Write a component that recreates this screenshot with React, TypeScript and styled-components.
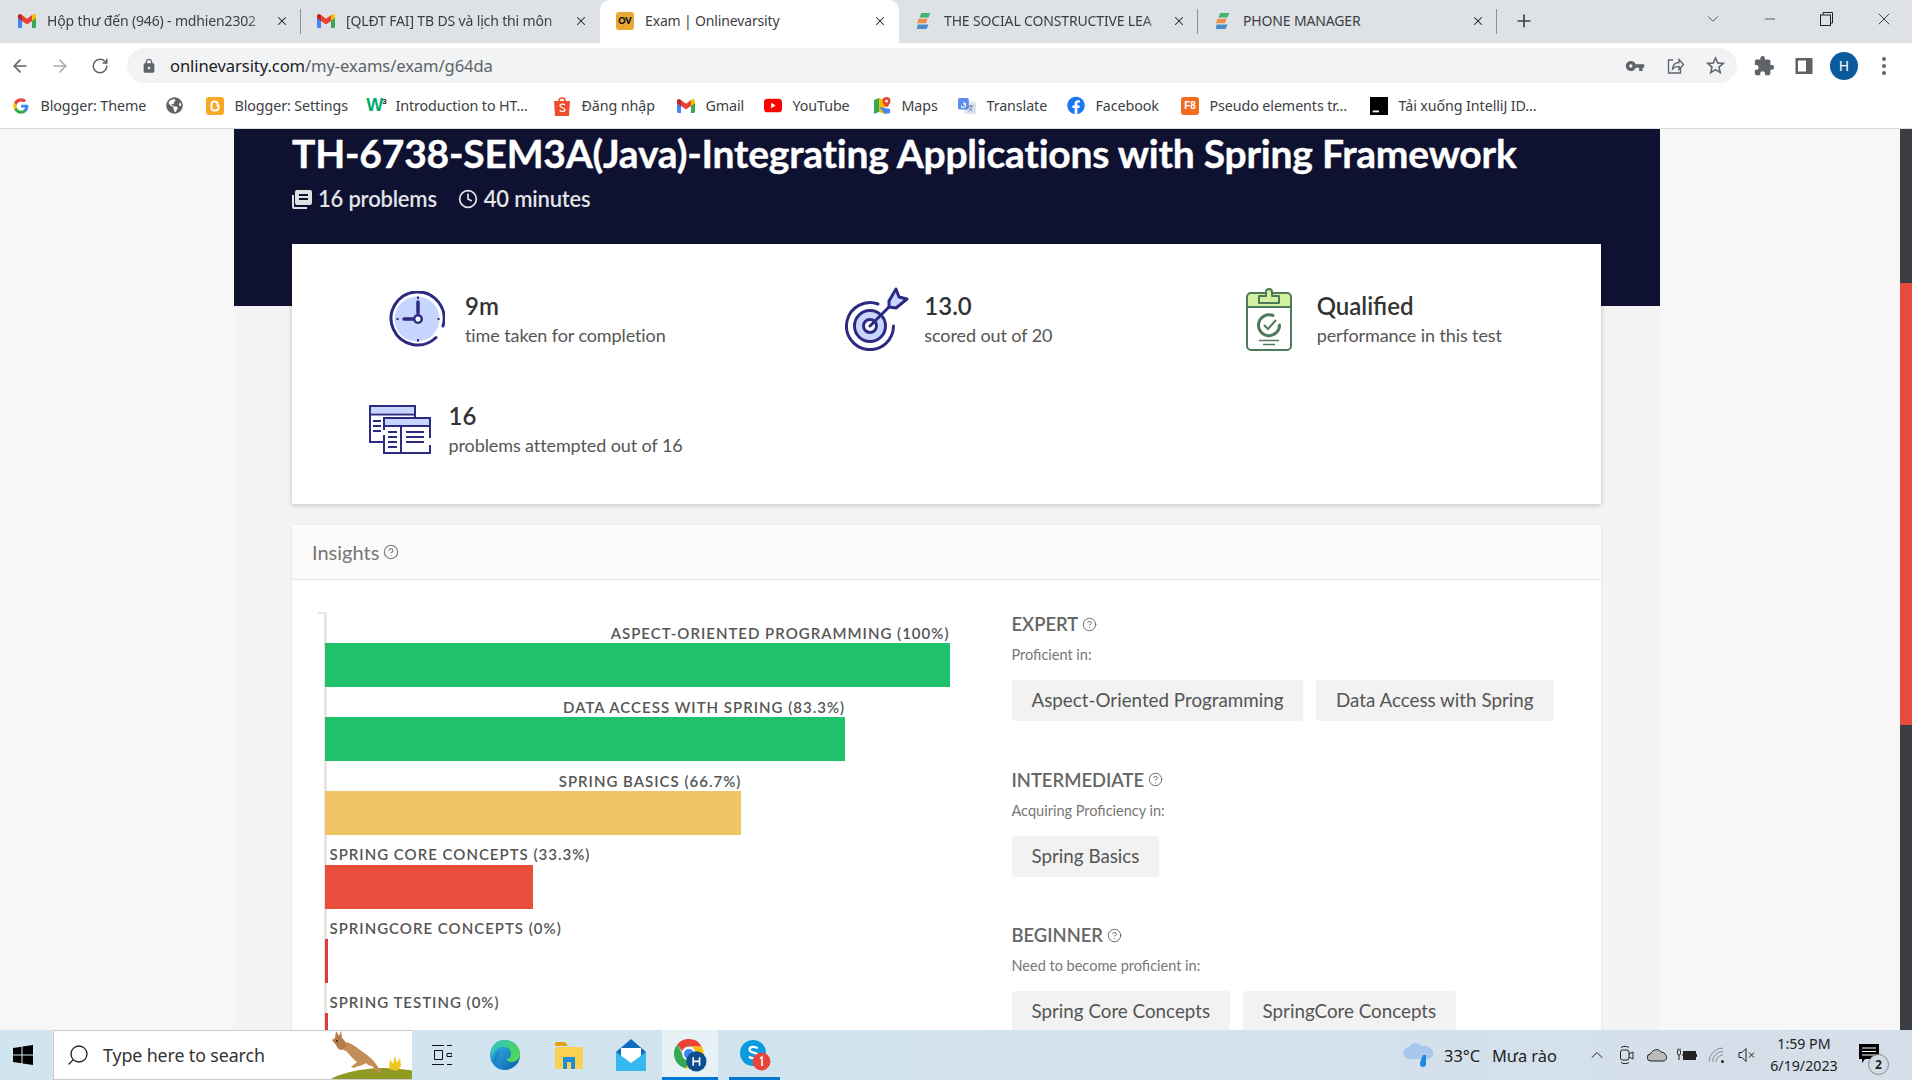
import React from "react";
import styled, { createGlobalStyle } from "styled-components";
import { ArrowLeft, ArrowRight, RotateCw, X, Plus, ChevronDown, Minus, CircleHelp, Clock, Search, ChevronUp } from "lucide-react";
import { MdLock, MdVpnKey, MdStarBorder, MdExtension } from "react-icons/md";
import { FaFacebook, FaGlobeAmericas } from "react-icons/fa";

const Global = createGlobalStyle`
  html, body { margin: 0; padding: 0; height: 100%; overflow: hidden; background: #f7f7f7; }
  #root { height: 100%; }
  * { box-sizing: border-box; }
`;

const UI = `"Noto Sans", "Open Sans", sans-serif`;
const LATO = `Lato, "Noto Sans", sans-serif`;

const Shell = styled.div`
  width: 1912px; height: 1080px; display: flex; flex-direction: column; overflow: hidden;
  font-family: ${UI};
`;
const TabStrip = styled.div`
  height: 43px; flex: none; background: #dee1e6; display: flex; padding-left: 2px; position: relative;
`;
const Tab = styled.div<{ $active?: boolean; $sep?: boolean }>`
  width: 299px; height: 43px; flex: none; display: flex; align-items: center; padding: 0 12px 2px 16px; position: relative;
  background: ${(p) => (p.$active ? "#fff" : "transparent")};
  border-radius: ${(p) => (p.$active ? "10px 10px 0 0" : "0")};
  &::after {
    content: ""; display: ${(p) => (p.$sep ? "block" : "none")}; position: absolute; right: 0; top: 9px; height: 25px; width: 1px; background: #8b8e93;
  }
`;
const TabIcon = styled.span`
  width: 18px; height: 18px; flex: none; display: flex; align-items: center; justify-content: center; margin-right: 11px;
`;
const TabTitle = styled.span<{ $fade?: boolean }>`
  flex: none; width: 222px; overflow: hidden; white-space: nowrap; font-size: 14px; color: #3c4043; letter-spacing: -0.15px;
  ${(p) => (p.$fade ? "mask-image: linear-gradient(to right, #000 90%, rgba(0,0,0,.25) 98%);" : "")}
`;
const TabClose = styled.span`
  flex: none; margin-left: 6px; width: 14px; height: 14px; display: flex; color: #202124;
`;
const LoadMark = styled.span`
  position: absolute; left: 801px; top: 0; width: 59px; height: 2px; background: #1a73e8;
`;
const PlusSlot = styled.div`
  width: 53px; display: flex; align-items: center; justify-content: center; color: #3c4043; padding-bottom: 1px;
`;
const WindowControls = styled.div`
  margin-left: auto; display: flex;
`;
const WindowBtn = styled.div`
  width: 57px; display: flex; align-items: center; justify-content: center; color: #202124; padding-bottom: 5px;
`;
const Toolbar = styled.div`
  height: 42px; flex: none; background: #fff; display: flex; align-items: center; padding-top: 3px;
`;
const ToolSlot = styled.div<{ $muted?: boolean }>`
  width: 40px; height: 35px; flex: none; display: flex; align-items: center; justify-content: center;
  color: ${(p) => (p.$muted ? "#a9abae" : "#5f6368")};
`;
const UrlPill = styled.div`
  width: 1610px; height: 35px; margin: 0 7px; flex: none; border-radius: 18px; background: #f1f3f4; display: flex; align-items: center; padding: 0 2px 0 14px;
`;
const UrlText = styled.span`
  margin-left: 13px; font-size: 16.6px; color: #5f6368; letter-spacing: -0.1px; white-space: nowrap;
  b { font-weight: 400; color: #202124; }
`;
const UrlActions = styled.div`
  margin-left: auto; display: flex;
`;
const Avatar = styled.span`
  width: 28px; height: 28px; border-radius: 50%; background: #0b5a9e; color: #fff; font-size: 14px; display: flex; align-items: center; justify-content: center;
`;
const Dots = styled.span`
  display: flex; flex-direction: column; gap: 3px;
  i { width: 4px; height: 4px; border-radius: 50%; background: #5f6368; display: block; }
`;
const Bookmarks = styled.div`
  height: 44px; flex: none; background: #fff; border-bottom: 1px solid #dadce0; display: flex; align-items: center; padding: 0 0 2px 12px;
`;
const Bookmark = styled.div<{ $w: number }>`
  width: ${(p) => p.$w}px; flex: none; display: flex; align-items: center; white-space: nowrap;
  font-size: 14.3px; color: #3c4043; letter-spacing: -0.1px;
`;
const BookmarkIcon = styled.span`
  width: 18px; height: 18px; flex: none; display: flex; align-items: center; justify-content: center; margin-right: 10.5px;
`;
const SquareBadge = styled.span<{ $bg: string }>`
  width: 18px; height: 18px; border-radius: 3px; background: ${(p) => p.$bg}; color: #fff; display: flex; align-items: center; justify-content: center;
  font: 700 10px "Liberation Sans", sans-serif;
`;
const OvBadge = styled.span`
  width: 18px; height: 18px; border-radius: 3px; background: #e9a82f; color: #151515; display: flex; align-items: center; justify-content: center;
  font: 800 9px Lato, sans-serif;
`;
const W3Mark = styled.span`
  color: #04aa6d; font: 700 18px "Liberation Sans", sans-serif; letter-spacing: -1px; white-space: nowrap;
  sup { font-size: 8px; line-height: 0; color: #222; }
`;
const Body = styled.div`
  flex: 1; min-height: 0; display: flex; background: #f7f7f7; overflow: hidden;
`;
const Page = styled.div`
  flex: 1; min-width: 0; overflow: hidden; padding-left: 234px;
`;
const Container = styled.div`
  width: 1426px; min-height: 100%; background: #f4f4f4;
`;
const Hero = styled.div`
  height: 177px; background: #0f1130; padding: 1px 58px 0; color: #fff;
`;
const Title = styled.h1`
  margin: 0; font: 700 39px/46px ${LATO}; color: #fff; white-space: nowrap; letter-spacing: -0.22px; -webkit-text-stroke: 0.4px #fff;
`;
const HeroMeta = styled.div`
  display: flex; align-items: center; margin-top: 8px; color: #e2e3e8; font: 600 22px/30px ${LATO};
`;
const MetaItem = styled.span`
  display: flex; align-items: center; gap: 6px; margin-right: 21px; letter-spacing: -0.2px;
`;
const Content = styled.div`
  margin: -62px 59px 0 58px; display: flex; flex-direction: column; gap: 21px;
`;
const StatsCard = styled.div`
  height: 260px; background: #fff; box-shadow: 0 1px 5px rgba(0, 0, 0, 0.22); padding: 20px 0; display: grid; grid-template-columns: repeat(3, 1fr); grid-auto-rows: 110px;
`;
const Stat = styled.div<{ $indent: number; $gap: number }>`
  display: flex; align-items: center; margin-left: ${(p) => p.$indent}px; gap: ${(p) => p.$gap}px;
`;
const StatText = styled.div`
  margin-top: -2px;
`;
const StatValue = styled.div`
  font: 600 24px/32px ${LATO}; color: #333;
`;
const StatLabel = styled.div`
  font: 400 18px/24px ${LATO}; color: #555; white-space: nowrap; margin-top: 1px; letter-spacing: -0.1px;
`;
const InsightsCard = styled.div`
  background: #fff; box-shadow: 0 0 3px rgba(0, 0, 0, 0.07); height: 700px;
`;
const InsightsHead = styled.div`
  height: 55px; background: #fbfbfb; border-bottom: 1px solid #e5e5e5; padding: 0 20px; display: flex; align-items: center; gap: 4px; font: 400 20px ${LATO}; color: #777;
`;
const InsightsBody = styled.div`
  display: flex; padding: 32px 0 0 32.5px;
`;
const Chart = styled.div`
  width: 625px; flex: none; position: relative; padding-top: 12px; margin-right: 62px; height: 520px;
  &::before { content: ""; position: absolute; left: -1px; top: 0; bottom: 0; width: 3px; background: #e6e6e6; }
  &::after { content: ""; position: absolute; left: -7px; top: 0; width: 7px; height: 2px; background: #e6e6e6; }
`;
const BarRow = styled.div`
  position: relative; margin-bottom: 11px; z-index: 1;
`;
const BarLabel = styled.div<{ $out: boolean }>`
  height: 19px; font: 600 15px/${(p) => (p.$out ? "17px" : "18px")} ${LATO}; color: #555; letter-spacing: 1px; white-space: nowrap;
  text-align: ${(p) => (p.$out ? "left" : "right")}; padding-left: ${(p) => (p.$out ? "5px" : "0")};
`;
const Bar = styled.div<{ $c: string }>`
  height: 44px; background: ${(p) => p.$c};
`;
const Levels = styled.div`
  flex: 1; min-width: 0;
`;
const Level = styled.div`
  margin-bottom: 46.5px;
`;
const LevelTitle = styled.div`
  height: 24px; display: flex; align-items: center; gap: 4px; font: 600 18.4px/24px ${LATO}; color: #666;
`;
const LevelSub = styled.div`
  font: 400 14.5px/20px ${LATO}; color: #777; margin-top: 9px;
`;
const Chips = styled.div`
  display: flex; gap: 12.5px; margin-top: 15px;
`;
const Chip = styled.div`
  height: 41px; padding: 0 20px; border-radius: 3px; background: #f2f2f2; color: #555; font: 400 18.8px/40px ${LATO}; white-space: nowrap;
`;
const ScrollTrack = styled.div`
  width: 12px; flex: none; background: #3a3d42; padding-top: 154px;
`;
const ScrollThumb = styled.div`
  height: 442px; background: #e74c3c;
`;
const Taskbar = styled.div`
  height: 50px; flex: none; display: flex; align-items: stretch; background: linear-gradient(90deg, #d0e5ef 0%, #d2e3ee 50%, #d5dee9 100%); position: relative;
`;
const StartBtn = styled.div`
  width: 53px; flex: none; display: flex; align-items: center; justify-content: center; padding-right: 8px;
`;
const SearchBox = styled.div`
  width: 359px; flex: none; background: #fff; border: 1px solid #c9cdd0; border-right: 0; display: flex; align-items: center; padding-left: 12px; overflow: hidden;
  color: #202020; font-size: 17.8px;
`;
const SearchText = styled.span`
  margin-left: 13px; letter-spacing: -0.1px; white-space: nowrap; color: #333;
`;
const Roo = styled.svg`
  margin-left: auto; flex: none;
`;
const TaskSlot = styled.div<{ $w: number; $on?: boolean; $open?: boolean }>`
  width: ${(p) => p.$w}px; flex: none; display: flex; align-items: center; justify-content: center; position: relative;
  background: ${(p) => (p.$on ? "#e6f1f6" : "transparent")};
  border-bottom: 3px solid ${(p) => (p.$open ? "#0078d4" : "transparent")};
  border-top: 3px solid transparent;
`;
const Weather = styled.div`
  margin-left: 623px; flex: none; display: flex; align-items: center; color: #222; font-size: 16.4px; white-space: nowrap;
`;
const Temp = styled.span`
  margin-left: 11px; width: 48px;
`;
const TrayRow = styled.div`
  margin-left: 25px; display: flex; align-items: center; flex: 1;
`;
const TraySlot = styled.div`
  width: 30px; flex: none; display: flex; align-items: center; justify-content: center; color: #222;
`;
const ClockBox = styled.div`
  width: 84px; flex: none; display: flex; flex-direction: column; align-items: center; justify-content: center; gap: 2px; font-size: 14.2px; line-height: 20px; color: #222;
`;
const Notify = styled.div`
  flex: 1; height: 50px; display: flex; align-items: center; padding: 0 0 2px 13px; position: relative;
`;
const NotifyBadge = styled.span`
  position: absolute; left: 22px; top: 24px; width: 21px; height: 21px; border-radius: 50%; background: #d3dbe4; border: 1px solid #888; font-size: 12px; font-weight: 700; color: #222; display: flex; align-items: center; justify-content: center;
`;

const Gmail = () => (
  <svg width="18" height="14" viewBox="0 0 18 14">
    <path d="M0 2v10.500A1.500 1.500 0 0 0 1.500 14H4V6z" fill="#4285f4" />
    <path d="M18 2v10.500a1.500 1.500 0 0 1-1.500 1.500H14V6z" fill="#34a853" />
    <path d="M14 1v6l4-3V2c0-1.600-2-2.600-3-1.500z" fill="#fbbc04" />
    <path d="M4 7V1l5 3.800L14 1v6L9 10.600z" fill="#ea4335" />
    <path d="M0 2v2l4 3V1L3 .5C2 -.5 0 .4 0 2z" fill="#c5221f" />
  </svg>
);
const Stripes = () => (
  <svg width="20" height="20" viewBox="0 0 20 20">
    <path d="M7 1h10l-2 5H5z" fill="#3fb66b" />
    <path d="M4 7.500h10l-2 5H2z" fill="#f08b4f" />
    <path d="M3 14h12l-2 5H2z" fill="#4a8cc7" />
  </svg>
);
const ShareIcon = () => (
  <svg width="20" height="20" viewBox="0 0 20 20" fill="none" stroke="#5f6368" strokeWidth="1.300">
    <path d="M8 4H3.500v13h12v-5" />
    <path d="M7.500 13c.5-4 3-6.500 6.500-6.500V3.500l4.500 5-4.500 5v-3.200c-3 0-5 1-6.500 2.700z" />
  </svg>
);
const PanelIcon = () => (
  <svg width="18" height="18" viewBox="0 0 18 18">
    <rect x="0.500" y="1" width="17" height="16" fill="#5f6368" />
    <rect x="3" y="3.500" width="8" height="11" fill="#fff" />
  </svg>
);
const GoogleG = () => (
  <svg width="16" height="16" viewBox="0 0 48 48">
    <path fill="#4285f4" d="M46 24.500c0-1.600-.1-3.100-.4-4.500H24v8.700h12.400c-.5 2.900-2.100 5.300-4.600 6.900v5.700h7.400c4.300-4 6.800-9.900 6.800-16.800z" />
    <path fill="#34a853" d="M24 47c6.200 0 11.400-2 15.200-5.600l-7.400-5.700c-2 1.400-4.700 2.200-7.800 2.200-6 0-11.100-4-12.900-9.500H3.500v5.900C7.300 41.800 15 47 24 47z" />
    <path fill="#fbbc04" d="M11.100 28.900c-1-2.900-1-6 0-8.800v-6H3.500a23 23 0 0 0 0 20.800z" />
    <path fill="#ea4335" d="M24 10.200c3.400 0 6.400 1.200 8.800 3.400l6.600-6.600C35.400 3.300 30.200 1 24 1 15 1 7.300 6.200 3.500 14.100l7.600 6C12.900 14.500 18 10.200 24 10.200z" />
  </svg>
);
const BloggerMark = () => (
  <SquareBadge $bg="#f9a825">
    <svg width="10" height="12" viewBox="0 0 10 12" fill="none" stroke="#fff" strokeWidth="2">
      <path d="M1.500 4a2.500 2.500 0 0 1 2.500-2.500h1A2.500 2.500 0 0 1 7.500 4v1.500H8.500V8A2.500 2.500 0 0 1 6 10.500H4A2.500 2.500 0 0 1 1.500 8z" />
    </svg>
  </SquareBadge>
);
const Shopee = () => (
  <svg width="18" height="20" viewBox="0 0 18 20">
    <path d="M6 5a3 3 0 0 1 6 0" fill="none" stroke="#ee4d2d" strokeWidth="1.500" />
    <path d="M1 5h16l-1 15H2z" fill="#ee4d2d" />
    <path d="M12 9c-1-1.300-5-1.500-5 .8 0 2.400 5 1.500 5 4 0 2.200-4 2-5.300.7" fill="none" stroke="#fff" strokeWidth="1.300" />
  </svg>
);
const YouTube = () => (
  <svg width="20" height="15" viewBox="0 0 20 15"><rect width="20" height="15" rx="4" fill="#f00" /><path d="M8 4.500v6l5-3z" fill="#fff" /></svg>
);
const MapsPin = () => (
  <svg width="18" height="18" viewBox="0 0 18 18">
    <path d="M1 3l5-2v14l-5 2z" fill="#34a853" />
    <path d="M6 1l6 2v14l-6-2z" fill="#fbbc04" />
    <path d="M6 10l6 7 5-1V12z" fill="#4285f4" />
    <path d="M13.500 0a4 4 0 0 0-4 4c0 3 4 6.500 4 6.500s4-3.500 4-6.500a4 4 0 0 0-4-4z" fill="#ea4335" />
    <circle cx="13.500" cy="4" r="1.500" fill="#fff" />
  </svg>
);
const TranslateMark = () => (
  <svg width="20" height="18" viewBox="0 0 20 18">
    <rect x="7" y="4" width="13" height="14" rx="2" fill="#dde3ee" />
    <rect x="0" y="0" width="12" height="13" rx="2" fill="#5b8def" />
    <path d="M3.500 8.500a2.500 2.500 0 1 0 2.500-3M6 7h2.500" fill="none" stroke="#fff" strokeWidth="1.200" />
    <path d="M11 9h6M14 8v2M12 15l4-5M13 11l3 4" fill="none" stroke="#6b7a90" strokeWidth="1" />
  </svg>
);
const BlackMark = () => (
  <svg width="20" height="20" viewBox="0 0 20 20"><rect width="20" height="20" fill="#000" /><rect x="3" y="15" width="7" height="2" fill="#fff" /></svg>
);

const INK = "#2e2a82";
const ClockStat = () => (
  <svg width="56" height="56" viewBox="0 0 56 56" fill="none">
    <circle cx="28" cy="28" r="22.500" fill="#c6d6ff" />
    <path d="M54 35A26.500 26.500 0 1 0 47 46.500" stroke={INK} strokeWidth="3" strokeLinecap="round" />
    <path d="M29 11v11" stroke={INK} strokeWidth="3.500" strokeLinecap="round" />
    <path d="M15 28h9" stroke={INK} strokeWidth="3.500" strokeLinecap="round" />
    <circle cx="29" cy="28" r="3.800" fill="#fff" stroke={INK} strokeWidth="2.500" />
    <path d="M29 5.500v2.500M29 48v2.500M7.500 28h2M50.500 28h-2" stroke={INK} strokeWidth="2" />
  </svg>
);
const TargetStat = () => (
  <svg width="64" height="64" viewBox="0 0 64 64" fill="none">
    <path d="M33 17A23.500 23.500 0 1 0 48.500 39" stroke={INK} strokeWidth="3" strokeLinecap="round" />
    <circle cx="25" cy="39" r="15.500" fill="#c6d6ff" stroke={INK} strokeWidth="3" />
    <circle cx="25" cy="39" r="6.500" fill="#fff" stroke={INK} strokeWidth="3" />
    <path d="M25 39l22-22" stroke={INK} strokeWidth="3" strokeLinecap="round" />
    <path d="M44 14l7-12 3 8 8 2-11 9-7-1z" fill="#c6d6ff" stroke={INK} strokeWidth="3" strokeLinejoin="round" />
  </svg>
);
const GRN = "#4f7a5a";
const ClipStat = () => (
  <svg width="46" height="63" viewBox="0 0 46 63" fill="none">
    <path d="M1.500 7a3 3 0 0 1 3-3h37a3 3 0 0 1 3 3v12h-43z" fill="#d2f0a0" />
    <rect x="1" y="5" width="44" height="57" rx="4" stroke={GRN} strokeWidth="2" />
    <path d="M1 19h44" stroke={GRN} strokeWidth="2" />
    <path d="M13 14V7h7V3a3 3 0 0 1 6 0v4h7v7z" transform="translate(0 1)" fill="#d2f0a0" stroke={GRN} strokeWidth="2" strokeLinejoin="round" />
    <path d="M27 27.500A10.500 10.500 0 1 0 33.500 37" stroke={GRN} strokeWidth="3" strokeLinecap="round" />
    <path d="M18 37l4 4 8-9" stroke={GRN} strokeWidth="2" />
    <path d="M13 52.500h20M17 56.500h12" stroke={GRN} strokeWidth="1.500" />
  </svg>
);
const WindowsStat = () => (
  <svg width="62" height="49" viewBox="0 0 62 49" fill="none">
    <rect x="1" y="1" width="45" height="36" fill="#fff" stroke={INK} strokeWidth="2" />
    <rect x="2" y="2" width="43" height="6" fill="#c6d6ff" />
    <path d="M1 9.500h45M4 16h8M4 21h8M4 26h8" stroke={INK} strokeWidth="2" />
    <rect x="15" y="13" width="46" height="35" fill="#fff" />
    <path d="M15 30v18h46v-8M61 33V13H15v12" stroke={INK} strokeWidth="2" />
    <rect x="16" y="14" width="44" height="6" fill="#c6d6ff" />
    <path d="M15 21h46M32 21v27M19 27h9M19 32h9M19 37h9M19 42h9M37 27h18M37 32h18M37 37h18" stroke={INK} strokeWidth="2" />
  </svg>
);
const Newspaper = () => (
  <svg width="20" height="19" viewBox="0 0 20 19" fill="#dfe0e6">
    <path d="M5 0h13a2 2 0 0 1 2 2v11a2 2 0 0 1-2 2H5a2 2 0 0 1-2-2V2a2 2 0 0 1 2-2zm2 4v2h9V4zm0 4v2h9V8z" fillRule="evenodd" />
    <path d="M0 5h2v12h13v2H2a2 2 0 0 1-2-2z" />
  </svg>
);
const WinLogo = () => (
  <svg width="20" height="20" viewBox="0 0 20 20" fill="#000">
    <path d="M0 3l8.500-1.200V9.500H0zM9.500 1.600L20 0v9.500H9.500zM0 10.500h8.500v7.700L0 17zM9.500 10.500H20V20L9.500 18.400z" />
  </svg>
);
const Kangaroo = () => (
  <Roo width="92" height="48" viewBox="0 0 92 48">
    <ellipse cx="64" cy="62" rx="64" ry="25" fill="#8e9a22" />
    <path d="M20 12c5-3 13 1 20 7 6 4 13 9 16 14l6 9-4 0-6-7c-3 0-4-1-6-3-4 3-9 3-12 5l-3-1 6-5c-3-2-8-8-11-11-4-1-7-5-6-8z" fill="#c58d58" />
    <path d="M12 9l3-2 1-7 3 5 2-5 1 7c3 2 4 5 4 8l-4 4c-3 0-5-2-6-5z" fill="#b57d4a" />
    <circle cx="17" cy="10" r="1" fill="#222" />
    <path d="M69 38l1-10 3 5 2-8 2 7 3-5 1 8-4 5z" fill="#f0c51c" />
  </Roo>
);
const Edge = () => (
  <svg width="30" height="30" viewBox="0 0 30 30">
    <defs>
      <linearGradient id="eg" x1="0" y1="0" x2="1" y2="1"><stop offset="0" stopColor="#35c1f1" /><stop offset="1" stopColor="#0c59a4" /></linearGradient>
      <linearGradient id="eg2" x1="0" y1="0" x2="1" y2="0.500"><stop offset="0" stopColor="#2cc1c8" /><stop offset="1" stopColor="#52d65c" /></linearGradient>
    </defs>
    <circle cx="15" cy="15" r="15" fill="url(#eg)" />
    <path d="M15 0c9 0 15 7 15 14 0 5-4 8-8 8-3 0-5-1-6-3 3 0 5-2 5-5 0-5-5-8-10-7C6 8 3 12 1 17-1 8 5 0 15 0z" fill="url(#eg2)" />
    <path d="M8 20c0 5 5 9 10 9-5 2-13 0-15-7 0-5 3-10 8-12-2 3-3 6-3 10z" fill="#1a85c8" />
  </svg>
);
const Folder = () => (
  <svg width="28" height="28" viewBox="0 0 28 28">
    <path d="M0 3a2 2 0 0 1 2-2h8l3 4H0z" fill="#e2a10c" />
    <rect y="6" width="28" height="22" rx="2" fill="#fcd053" />
    <path d="M8 28V16h12v12h-4v-7h-4v7z" fill="#1d8fd8" />
  </svg>
);
const MailIcon = () => (
  <svg width="30" height="32" viewBox="0 0 30 32">
    <path d="M15 0l15 13v19H0V13z" fill="#0f6cbd" />
    <path d="M5 9h20v12l-10 5-10-5z" fill="#fff" />
    <path d="M0 13l15 11 15-11v19H0z" fill="#35b8f0" />
  </svg>
);
const ChromeIcon = () => (
  <svg width="34" height="34" viewBox="0 0 32 32">
    <path d="M15 1a14 14 0 0 1 12.100 7H15a7 7 0 0 0-6.500 4.500L4 6a14 14 0 0 1 11-5z" fill="#ea4335" />
    <path d="M4 6l6 11a6 6 0 0 0 6 4l-4 7.500A14 14 0 0 1 4 6z" fill="#34a853" />
    <path d="M27.100 8a14 14 0 0 1-15 20.500l6-10.500a7 7 0 0 0 0-10z" fill="#fbbc04" />
    <circle cx="15" cy="15" r="5.500" fill="#4285f4" stroke="#fff" strokeWidth="1.500" />
    <circle cx="22" cy="22" r="9.500" fill="#0b4f8f" />
    <path d="M19 18v8M25 18v8M19 22h6" stroke="#fff" strokeWidth="1.500" />
  </svg>
);
const SkypeIcon = () => (
  <svg width="32" height="32" viewBox="0 0 32 32">
    <circle cx="14" cy="14" r="13" fill="#0d9be0" />
    <path d="M18.500 9.500c-1.500-2-8-2.500-8 1.200 0 3.800 8.500 2 8.500 6 0 3.500-7 3.500-9 .8" fill="none" stroke="#fff" strokeWidth="2.200" />
    <circle cx="22.500" cy="22.500" r="9" fill="#e8453c" />
    <path d="M21 19.500l2-1.500v9" stroke="#fff" strokeWidth="1.600" fill="none" />
  </svg>
);
const CloudRain = () => (
  <svg width="30" height="28" viewBox="0 0 30 28">
    <path d="M7 18a6 6 0 0 1-1-12c2-4 9-6 12-1 6-1 12 2 12 7 0 4-3 6-7 6z" fill="#a7c7ec" />
    <path d="M20 14l3 0v9a3 3 0 1 1-6 0c0-3 2-6 3-9z" fill="#1e88e5" />
  </svg>
);
const CamTray = () => (
  <svg width="16" height="20" viewBox="0 0 16 20" fill="none" stroke="#222" strokeWidth="1">
    <rect x="1.500" y="5" width="8.500" height="10" rx="2" /><path d="M10 9l4-2v7l-4-2" /><path d="M2 2.500C4 1 8 1 10 2.500M2 17.500c2 1.500 6 1.500 8 0" />
  </svg>
);
const CloudTray = () => (
  <svg width="20" height="14" viewBox="0 0 20 14"><path d="M4 13a3.500 3.500 0 0 1-.5-7C5 2 11-.5 14 4c3.500 0 5.500 3 5.500 5.500 0 2-1.500 3.500-3.500 3.500z" fill="#bbb" stroke="#222" strokeWidth="1" /></svg>
);
const BatteryTray = () => (
  <svg width="20" height="14" viewBox="0 0 20 14"><path d="M0.500 3v2.500a1.500 1.500 0 0 0 3 0V3M2 7v5M1 .5V3M3 .5V3" stroke="#222" fill="none" /><path d="M5 7h1" stroke="#222" /><rect x="6" y="3" width="13" height="9" fill="#222" /><rect x="19" y="6" width="1" height="3" fill="#222" /></svg>
);
const WifiTray = () => (
  <svg width="18" height="16" viewBox="0 0 18 16" fill="none" stroke="#8a8f96" strokeWidth="1"><path d="M1 15A14 14 0 0 1 15 1M4.500 15A10.500 10.500 0 0 1 15 4.500M8 15a7 7 0 0 1 7-7" /><circle cx="14.500" cy="14.500" r="1.500" fill="#222" stroke="none" /></svg>
);
const MuteTray = () => (
  <svg width="18" height="16" viewBox="0 0 18 16" fill="none" stroke="#222" strokeWidth="1"><path d="M1 5.500h3L8 1.500v13l-4-4H1zM11 5.500l5 5M16 5.500l-5 5" /></svg>
);
const ChatIcon = () => (
  <svg width="20" height="20" viewBox="0 0 20 20"><path d="M0 0h20v15H6l-3 4v-4H0z" fill="#000" /><path d="M3 4h14M3 7.500h14M3 11h14" stroke="#fff" /></svg>
);

const tabs = [
  { icon: <Gmail />, title: "Hộp thư đến (946) - mdhien2302", sep: true, fade: true },
  { icon: <Gmail />, title: "[QLĐT FAI] TB DS và lịch thi môn", sep: false, fade: true },
  { icon: <OvBadge>OV</OvBadge>, title: "Exam | Onlinevarsity", sep: false, active: true },
  { icon: <Stripes />, title: "THE SOCIAL CONSTRUCTIVE LEA", sep: true, fade: true },
  { icon: <Stripes />, title: "PHONE MANAGER", sep: true },
];
const bookmarks = [
  { w: 153, icon: <GoogleG />, text: "Blogger: Theme" },
  { w: 41, icon: <FaGlobeAmericas size={17} color="#5f6368" />, text: "" },
  { w: 161, icon: <BloggerMark />, text: "Blogger: Settings" },
  { w: 186, icon: <W3Mark>W<sup>3</sup></W3Mark>, text: "Introduction to HT..." },
  { w: 124, icon: <Shopee />, text: "Đăng nhập" },
  { w: 87, icon: <Gmail />, text: "Gmail" },
  { w: 109, icon: <YouTube />, text: "YouTube" },
  { w: 85, icon: <MapsPin />, text: "Maps" },
  { w: 109, icon: <TranslateMark />, text: "Translate" },
  { w: 114, icon: <FaFacebook size={19} color="#1877f2" />, text: "Facebook" },
  { w: 189, icon: <SquareBadge $bg="#f26b21">F8</SquareBadge>, text: "Pseudo elements tr..." },
  { w: 200, icon: <BlackMark />, text: "Tải xuống IntelliJ ID..." },
];
const stats = [
  { icon: <ClockStat />, value: "9m", label: "time taken for completion", indent: 97, gap: 20 },
  { icon: <TargetStat />, value: "13.0", label: "scored out of 20", indent: 117, gap: 15 },
  { icon: <ClipStat />, value: "Qualified", label: "performance in this test", indent: 81, gap: 25 },
  { icon: <WindowsStat />, value: "16", label: "problems attempted out of 16", indent: 77, gap: 17.5 },
];
const bars = [
  { label: "ASPECT-ORIENTED PROGRAMMING (100%)", pct: 100, color: "#1fc16b" },
  { label: "DATA ACCESS WITH SPRING (83.3%)", pct: 83.3, color: "#1fc16b" },
  { label: "SPRING BASICS (66.7%)", pct: 66.7, color: "#f0c565" },
  { label: "SPRING CORE CONCEPTS (33.3%)", pct: 33.3, color: "#e94e3d", out: true },
  { label: "SPRINGCORE CONCEPTS (0%)", pct: 0.6, color: "#e03a3a", out: true },
  { label: "SPRING TESTING (0%)", pct: 0.6, color: "#e03a3a", out: true },
];
const levels = [
  { name: "EXPERT", sub: "Proficient in:", chips: ["Aspect-Oriented Programming", "Data Access with Spring"] },
  { name: "INTERMEDIATE", sub: "Acquiring Proficiency in:", chips: ["Spring Basics"] },
  { name: "BEGINNER", sub: "Need to become proficient in:", chips: ["Spring Core Concepts", "SpringCore Concepts"] },
];

export default function App() {
  return (
    <Shell>
      <Global />
      <TabStrip>
        <LoadMark />
        {tabs.map((t) => (
          <Tab key={t.title} $active={t.active} $sep={t.sep}>
            <TabIcon>{t.icon}</TabIcon>
            <TabTitle $fade={t.fade}>{t.title}</TabTitle>
            <TabClose><X size={14} strokeWidth={1.8} /></TabClose>
          </Tab>
        ))}
        <PlusSlot><Plus size={20} strokeWidth={2} /></PlusSlot>
        <WindowControls>
          <WindowBtn><ChevronDown size={18} strokeWidth={1} /></WindowBtn>
          <WindowBtn><Minus size={16} strokeWidth={1} /></WindowBtn>
          <WindowBtn>
            <svg width="13" height="14" viewBox="0 0 13 14" fill="none" stroke="#202124"><rect x="0.500" y="3" width="10" height="10.500" /><path d="M3 3V.5h9.500V11H10.500" /></svg>
          </WindowBtn>
          <WindowBtn><X size={20} strokeWidth={1} /></WindowBtn>
        </WindowControls>
      </TabStrip>
      <Toolbar>
        <ToolSlot><ArrowLeft size={20} strokeWidth={2} /></ToolSlot>
        <ToolSlot $muted><ArrowRight size={20} strokeWidth={2} /></ToolSlot>
        <ToolSlot><RotateCw size={18} strokeWidth={2} /></ToolSlot>
        <UrlPill>
          <MdLock size={16} color="#5f6368" />
          <UrlText><b>onlinevarsity.com</b>/my-exams/exam/g64da</UrlText>
          <UrlActions>
            <ToolSlot><MdVpnKey size={20} /></ToolSlot>
            <ToolSlot><ShareIcon /></ToolSlot>
            <ToolSlot><MdStarBorder size={23} /></ToolSlot>
          </UrlActions>
        </UrlPill>
        <ToolSlot><MdExtension size={22} /></ToolSlot>
        <ToolSlot><PanelIcon /></ToolSlot>
        <ToolSlot><Avatar>H</Avatar></ToolSlot>
        <ToolSlot><Dots><i /><i /><i /></Dots></ToolSlot>
      </Toolbar>
      <Bookmarks>
        {bookmarks.map((b, i) => (
          <Bookmark key={i} $w={b.w}>
            <BookmarkIcon>{b.icon}</BookmarkIcon>
            {b.text}
          </Bookmark>
        ))}
      </Bookmarks>
      <Body>
        <Page>
          <Container>
            <Hero>
              <Title>TH-6738-SEM3A(Java)-Integrating Applications with Spring Framework</Title>
              <HeroMeta>
                <MetaItem><Newspaper /> 16 problems</MetaItem>
                <MetaItem><Clock size={20} strokeWidth={2} /> 40 minutes</MetaItem>
              </HeroMeta>
            </Hero>
            <Content>
              <StatsCard>
                {stats.map((s) => (
                  <Stat key={s.label} $indent={s.indent} $gap={s.gap}>
                    {s.icon}
                    <StatText>
                      <StatValue>{s.value}</StatValue>
                      <StatLabel>{s.label}</StatLabel>
                    </StatText>
                  </Stat>
                ))}
              </StatsCard>
              <InsightsCard>
                <InsightsHead>Insights <CircleHelp size={16} strokeWidth={1.6} /></InsightsHead>
                <InsightsBody>
                  <Chart>
                    {bars.map((b) => (
                      <BarRow key={b.label} style={{ width: `${b.pct}%` }}>
                        <BarLabel $out={!!b.out}>{b.label}</BarLabel>
                        <Bar $c={b.color} />
                      </BarRow>
                    ))}
                  </Chart>
                  <Levels>
                    {levels.map((l) => (
                      <Level key={l.name}>
                        <LevelTitle>{l.name} <CircleHelp size={15} strokeWidth={1.5} /></LevelTitle>
                        <LevelSub>{l.sub}</LevelSub>
                        <Chips>{l.chips.map((c) => <Chip key={c}>{c}</Chip>)}</Chips>
                      </Level>
                    ))}
                  </Levels>
                </InsightsBody>
              </InsightsCard>
            </Content>
          </Container>
        </Page>
        <ScrollTrack><ScrollThumb /></ScrollTrack>
      </Body>
      <Taskbar>
        <StartBtn><WinLogo /></StartBtn>
        <SearchBox>
          <Search size={24} strokeWidth={1.3} style={{ transform: "scaleX(-1)" }} />
          <SearchText>Type here to search</SearchText>
          <Kangaroo />
        </SearchBox>
        <TaskSlot $w={59}>
          <svg width="20" height="20" viewBox="0 0 20 20" fill="none" stroke="#111"><path d="M0 .5h12M0 19.500h12M2.500 5.500h8v9h-8zM15 .5h5M15 19.500h5M15 8.500h5v3h-5z" /></svg>
        </TaskSlot>
        <TaskSlot $w={68}><Edge /></TaskSlot>
        <TaskSlot $w={60}><Folder /></TaskSlot>
        <TaskSlot $w={63}><MailIcon /></TaskSlot>
        <TaskSlot $w={56} $on $open><ChromeIcon /></TaskSlot>
        <TaskSlot $w={11} />
        <TaskSlot $w={51} $open><SkypeIcon /></TaskSlot>
        <Weather>
          <CloudRain />
          <Temp>33°C</Temp>
          Mưa rào
        </Weather>
        <TrayRow>
          <TraySlot><ChevronUp size={20} strokeWidth={1.2} /></TraySlot>
          <TraySlot><CamTray /></TraySlot>
          <TraySlot><CloudTray /></TraySlot>
          <TraySlot><BatteryTray /></TraySlot>
          <TraySlot><WifiTray /></TraySlot>
          <TraySlot><MuteTray /></TraySlot>
          <ClockBox><span>1:59 PM</span><span>6/19/2023</span></ClockBox>
          <Notify><ChatIcon /><NotifyBadge>2</NotifyBadge></Notify>
        </TrayRow>
      </Taskbar>
    </Shell>
  );
}
